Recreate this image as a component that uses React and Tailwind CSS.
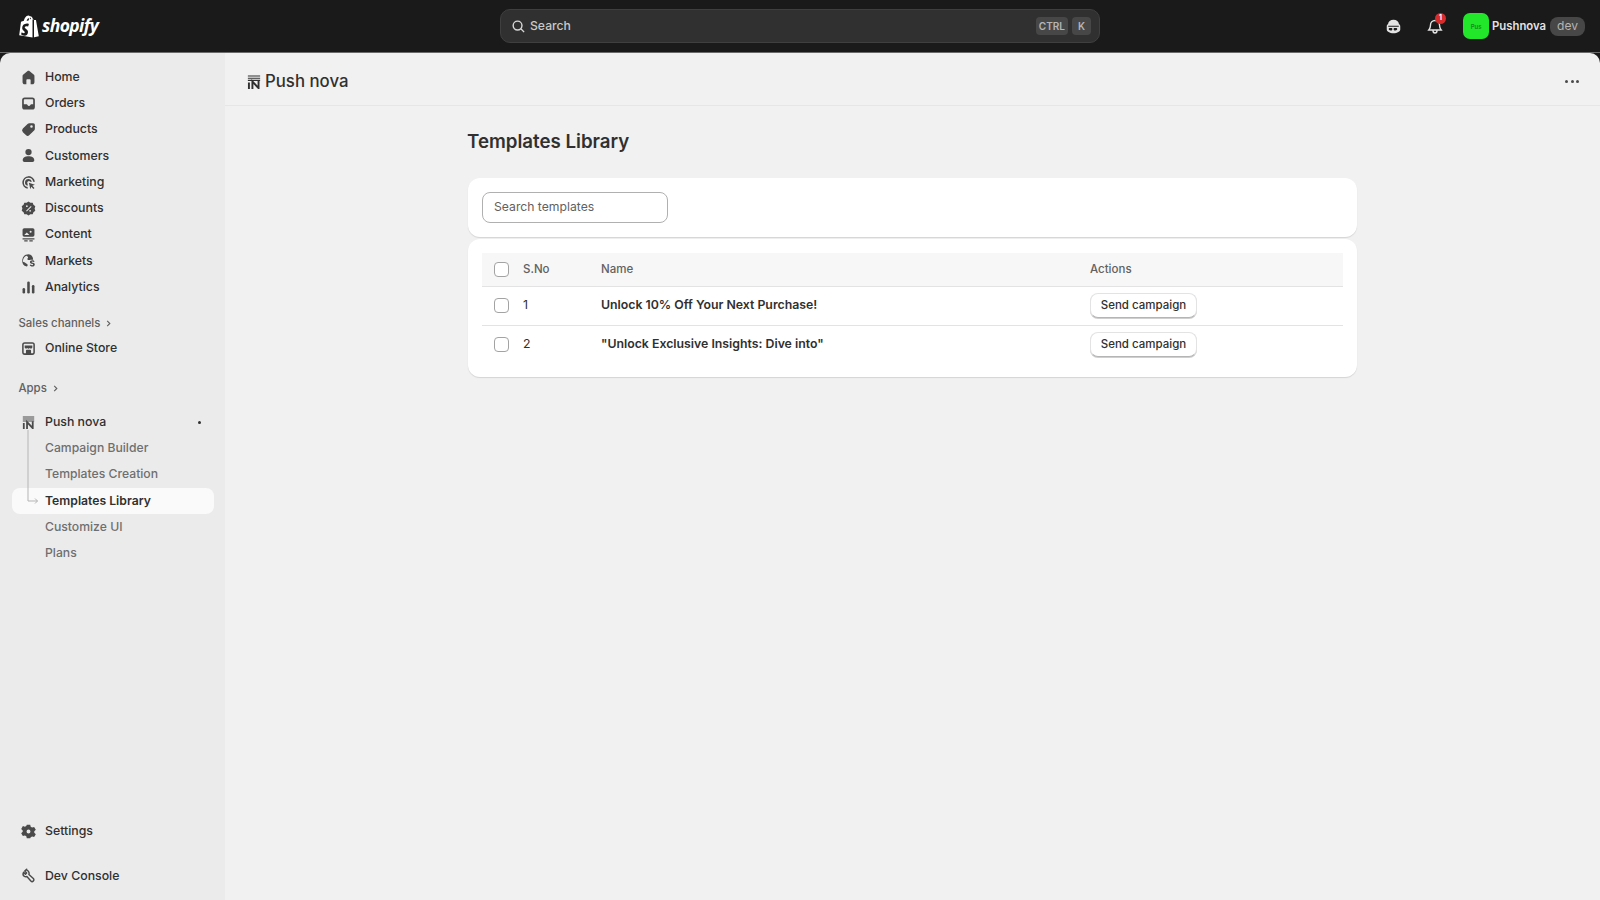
import React from 'react'

const Icon = ({ children, className = "w-[17px] h-[17px]" }) => (
  <svg viewBox="0 0 20 20" className={className} fill="currentColor">{children}</svg>
)

const PushNovaIcon = ({ className }) => (
  <svg viewBox="0 0 16 16" className={className} fill="none" stroke="currentColor">
    <path d="M1 1.200h14M1 3.700h14M1 6.200h14" strokeWidth="1.300" />
    <path d="M2.200 8.500v7.500M6.200 16V7.500l7 7.500V6.500" strokeWidth="2.200" />
  </svg>
)

const icons = {
  home: <path d="M10 2.200c-.5 0-1 .2-1.400.5L3.600 6.900C3.200 7.300 3 7.800 3 8.400v7.100C3 16.900 4.100 18 5.500 18H7.500v-5a1 1 0 0 1 1-1h3a1 1 0 0 1 1 1v5h2c1.400 0 2.500-1.100 2.500-2.500V8.400c0-.6-.2-1.100-.6-1.500l-5-4.200c-.4-.3-.9-.5-1.400-.5Z" />,
  orders: <path fillRule="evenodd" d="M5.500 3A3 3 0 0 0 2.500 6v8a3 3 0 0 0 3 3h9a3 3 0 0 0 3-3V6a3 3 0 0 0-3-3h-9ZM4.500 11V6a1 1 0 0 1 1-1h9a1 1 0 0 1 1 1v5h-2.200c-.5 0-.9.300-1.100.700-.3.700-1 1.100-1.700 1.100s-1.400-.4-1.700-1.100c-.2-.4-.6-.7-1.100-.7H4.500Z" />,
  products: <path fillRule="evenodd" d="M11 2.500h4.500A2 2 0 0 1 17.500 4.500V9c0 .8-.3 1.500-.9 2.100l-5.500 5.500a3 3 0 0 1-4.200 0l-3.500-3.500a3 3 0 0 1 0-4.200l5.500-5.500c.6-.6 1.300-.9 2.100-.9Zm2.500 5.500a1.500 1.500 0 1 0 0-3 1.500 1.500 0 0 0 0 3Z" />,
  customers: <><circle cx="10" cy="6" r="3.700" /><path d="M3.200 15.500c0-2.700 2.800-4.500 6.800-4.500s6.800 1.800 6.800 4.500c0 1.200-.9 2-2 2H5.200c-1.100 0-2-.8-2-2Z" /></>,
  marketing: <><path d="M10 2.500a7.500 7.500 0 0 0-1 14.900v-2A5.500 5.500 0 1 1 15.500 9h2A7.500 7.500 0 0 0 10 2.500Z" /><path d="M10 6a4 4 0 0 0-1 7.900v-2.200A2 2 0 1 1 12 9h2a4 4 0 0 0-4-3Z" /><path d="M10.500 10.200l7 2.300-3 1.300 2.500 2.700-1.200 1.100-2.500-2.600-1.200 3-1.600-7.800Z" /></>,
  discounts: <path fillRule="evenodd" d="M10 1.800l2.200 1.500 2.700-.1.900 2.500 2.200 1.600-.8 2.700.8 2.700-2.200 1.600-.9 2.500-2.700-.1-2.200 1.500-2.200-1.500-2.700.1-.9-2.500-2.200-1.600.8-2.700-.8-2.700 2.200-1.600.9-2.500 2.700.1L10 1.800Zm-1.900 6.500a1 1 0 1 0 0-2 1 1 0 0 0 0 2Zm3.800 5.400a1 1 0 1 0 0-2 1 1 0 0 0 0 2ZM12.800 7l-5.600 5.600.8.800L13.600 7.800 12.800 7Z" />,
  content: <><path fillRule="evenodd" d="M5 2.500h10A2 2 0 0 1 17 4.500v6A2 2 0 0 1 15 12.500H5A2 2 0 0 1 3 10.500v-6A2 2 0 0 1 5 2.500Zm7.500 3a1.200 1.200 0 1 0 0 2.400 1.200 1.200 0 0 0 0-2.400ZM5 10.500l3-3 3 3H5Z" /><path d="M3 14.300h14v1.500H3zM5 16.800h4v1.400H5zM11 16.800h4v1.400h-4z" /></>,
  markets: <><path fillRule="evenodd" d="M10 2.500a7.500 7.500 0 0 0-2 14.700c.7-.5 1-1.100 1-2 0-1.400-1.800-1.300-2.500-2.200-.8-1-2-.7-3-1.500C3.200 9 5 5 8 4.500c.5 1 1.500 1 1.500 2S8 8 9 9.200c1 .5 2 0 3 .3V9h3.500c0-3.600-2.500-6.500-5.500-6.500Z" /><path d="M14.500 9.800c-1.700 0-2.800.9-2.800 2.200 0 2.300 3.800 1.500 3.800 2.800 0 .5-.5.8-1.100.8-.8 0-1.300-.4-1.600-1l-1.400.7c.5 1.100 1.600 1.800 3 1.800 1.800 0 3-1 3-2.400 0-2.400-3.800-1.700-3.800-2.900 0-.4.400-.7 1-.7s1 .3 1.300.8l1.300-.7c-.5-.9-1.400-1.400-2.700-1.400Z" /></>,
  analytics: <><rect x="3" y="10.500" width="3" height="6.500" rx="1.500" /><rect x="8.500" y="3" width="3" height="14" rx="1.500" /><rect x="14" y="7" width="3" height="10" rx="1.500" /></>,
  store: <><path fillRule="evenodd" d="M5.500 2.500h9a3 3 0 0 1 3 3v9a3 3 0 0 1-3 3h-9a3 3 0 0 1-3-3v-9a3 3 0 0 1 3-3Zm0 1.800A1.200 1.200 0 0 0 4.300 5.500v9c0 .7.500 1.200 1.200 1.200H7V12.500a1 1 0 0 1 1-1h4a1 1 0 0 1 1 1v3.200h1.500c.7 0 1.200-.5 1.200-1.200v-9c0-.7-.5-1.200-1.200-1.200h-9Z" /><path d="M5.500 6.500h9v2.200a1.700 1.700 0 0 1-3 .6 2 2 0 0 1-3 0 1.700 1.700 0 0 1-3-.6V6.500Z" /></>,
  settings: <path fillRule="evenodd" d="M8 2h4l.6 2.400 1.600.9 2.400-.7 2 3.400-1.800 1.700v1.800l1.800 1.700-2 3.400-2.400-.7-1.600.9L12 18H8l-.6-2.400-1.600-.9-2.400.7-2-3.400 1.800-1.700V8.700L1.400 7l2-3.400 2.400.7 1.600-.9L8 2Zm2 10.300a2.300 2.300 0 1 0 0-4.600 2.300 2.300 0 0 0 0 4.600Z" />,
  console: <path fill="none" stroke="currentColor" strokeWidth="1.700" strokeLinejoin="round" d="M7.800 2.600 5.600 4.800l2.200 2.200-1.400 1.400-2.200-2.200c-1 2-.7 3.700.7 4.700 1 .7 2.200.8 3.200.3l4.700 5.300c.8.800 2.100.8 2.900 0s.8-2.100 0-2.900l-5.200-4.800c.5-1.100.3-2.300-.4-3.300-.7-1-1.500-1.700-2.500-2.100Z" />,
}

const NavRow = ({ icon, label }) => (
  <div className="flex items-center h-[26.25px] pl-[20px] text-[12.3px] font-medium text-[#303030]">
    <span className="w-[17px] flex justify-center text-[#4a4a4a]"><Icon>{icons[icon]}</Icon></span>
    <span className="ml-[8px]">{label}</span>
  </div>
)

const SectionLabel = ({ label, className }) => (
  <div className={`flex items-center gap-[5px] h-[20px] pl-[18.500px] text-[11.400px] font-medium text-[#616161] ${className}`}>
    {label}
    <svg viewBox="0 0 8 8" className="w-[7px] h-[7px]" fill="none" stroke="currentColor" strokeWidth="1.300"><path d="M2.500 1 5.500 4 2.500 7" /></svg>
  </div>
)

const SubRow = ({ label, active }) => (
  <div className={`flex items-center h-[26.25px] ml-[12px] mr-[11px] pl-[33px] text-[12.2px] ${active ? "bg-[#fafafa] rounded-[8px] font-semibold text-[#303030]" : "font-medium text-[#6f6f6f]"}`}>
    {label}
  </div>
)

const Sidebar = () => (
  <aside className="w-[225px] shrink-0 h-full flex flex-col bg-[#ebebeb] rounded-tl-[10px] pt-[11px]">
    <NavRow icon="home" label="Home" />
    <NavRow icon="orders" label="Orders" />
    <NavRow icon="products" label="Products" />
    <NavRow icon="customers" label="Customers" />
    <NavRow icon="marketing" label="Marketing" />
    <NavRow icon="discounts" label="Discounts" />
    <NavRow icon="content" label="Content" />
    <NavRow icon="markets" label="Markets" />
    <NavRow icon="analytics" label="Analytics" />
    <SectionLabel label="Sales channels" className="mt-[13px] mb-[2px]" />
    <NavRow icon="store" label="Online Store" />
    <SectionLabel label="Apps" className="mt-[17px] mb-[10.500px]" />
    <div className="relative">
      <div className="flex items-center h-[26.25px] pl-[20px] pr-[24px] text-[12.3px] font-medium text-[#303030]">
        <span className="w-[17px] flex justify-center text-[#4a4a4a]"><PushNovaIcon className="w-[13px] h-[13px]" /></span>
        <span className="ml-[8px]">Push nova</span>
        <span className="ml-auto w-[3px] h-[3px] rounded-full bg-[#303030]" />
      </div>
      <SubRow label="Campaign Builder" />
      <SubRow label="Templates Creation" />
      <SubRow label="Templates Library" active />
      <SubRow label="Customize UI" />
      <SubRow label="Plans" />
      {/* tree line */}
      <svg className="absolute left-[26px] top-[21px] w-[14px] h-[75px]" viewBox="0 0 14 75" fill="none" stroke="#b5b5b5" strokeWidth="1">
        <path d="M2 0V71H11.500M9 68.500 11.500 71 9 73.500" />
      </svg>
    </div>
    <div className="mt-auto">
      <div className="pb-[18.500px]"><NavRow icon="settings" label="Settings" /></div>
      <div className="pb-[11px]"><NavRow icon="console" label="Dev Console" /></div>
    </div>
  </aside>
)

const TopBar = () => (
  <header className="h-[53px] shrink-0 flex items-center bg-[#1a1a1a] border-b border-[#6b6b6b] pl-[19px] pr-[15px] relative">
    <div className="w-[481px] flex items-center gap-[3px] text-white shrink-0">
      <svg viewBox="0 0 20 23" className="w-[20px] h-[23px]" fill="currentColor">
        <path d="M15.200 4.400 13.900 4.100C13.500 2.500 12.600 1.300 11.300 1.300L10.900 1.300C10.500.8 10 .5 9.500.5 6.700.5 5.300 4 4.900 5.800L2.700 6.500C2 6.700 2 6.700 1.900 7.400L.2 20.200 13.500 22.500V4.400ZM9.900 5.200 7.700 5.900C8 4.700 8.600 3.500 9.700 3c.2.500.2 1.200.2 2.200ZM11 2.500c.5.100.8.700 1 1.500l-1.100.3c0-.7-.1-1.300.1-1.800ZM14 22.500l5.800-1.300L17 5.300c0-.1-.2-.2-.3-.2L15 5V22.500Z" />
        <path d="M9.800 9.400 9 11.700s-.8-.4-1.700-.4c-1.400 0-1.500.9-1.500 1.100 0 1.200 3.200 1.700 3.200 4.600 0 2.300-1.400 3.700-3.400 3.700-2.300 0-3.500-1.500-3.500-1.500l.6-2s1.200 1 2.200 1c.7 0 .9-.5.9-.9 0-1.600-2.600-1.700-2.600-4.400 0-2.200 1.600-4.400 4.800-4.400 1.300 0 1.800.4 1.800.4Z" fill="#1a1a1a" />
      </svg>
      <span className="text-[17.500px] leading-none font-bold italic tracking-[-0.6px] font-['Open_Sans',sans-serif] mb-[1px]">shopify</span>
    </div>
    <div className="w-[600px] h-[34px] shrink-0 flex items-center rounded-[10px] bg-[#303030] border border-[#3f3f3f] pl-[10px] pr-[8px] text-[12.2px] font-medium text-[#c9c9c9]">
      <svg viewBox="0 0 16 16" className="w-[15px] h-[15px]" fill="none" stroke="#d8d8d8" strokeWidth="1.500"><circle cx="7" cy="7" r="4.700" /><path d="m10.500 10.500 3.500 3.500" /></svg>
      <span className="ml-[4px]">Search</span>
      <span className="ml-auto h-[18px] px-[3px] flex items-center rounded-[4px] bg-[#474747] text-[10px] font-semibold text-[#b5b5b5]">CTRL</span>
      <span className="ml-[4px] w-[19px] h-[18px] flex items-center justify-center rounded-[4px] bg-[#474747] text-[10px] font-semibold text-[#b5b5b5]">K</span>
    </div>
    <div className="ml-auto flex items-center">
      <svg viewBox="0 0 16 16" className="w-[15px] h-[15px] text-[#e3e3e3]" fill="currentColor">
        <path fillRule="evenodd" d="M8 .8c3.300 0 5.500 1.900 5.800 4.600.9.500 1.400 1.300 1.400 2.500v3.300c0 2.100-3 4-7.200 4S.8 13.300.8 11.200V7.900c0-1.200.5-2 1.400-2.500C2.500 2.700 4.700.8 8 .8ZM2.400 7.300h11.200v.9H2.400v-.9Zm1.500 2.400c-.6 0-1 .4-1 1s.7 1.500 2 1.500 1.900-.6 1.900-1.400-.5-1.100-1.100-1.100H3.900Zm5.300 0c-.6 0-1.100.4-1.100 1.100s.7 1.400 1.900 1.400 2-.9 2-1.500-.4-1-1-1H9.200Z" />
      </svg>
      <div className="relative ml-[26px] mr-[20px] w-[16px] h-[18px] flex items-center">
        <svg viewBox="0 0 16 18" className="w-[16px] h-[18px]" fill="none" stroke="#e3e3e3" strokeWidth="1.400"><path d="M3.500 8a4.500 4.500 0 0 1 9 0c0 3 .8 3.500 1.800 5H1.700c1-1.500 1.800-2 1.800-5ZM6 13.500c0 1.300.8 2.500 2 2.500s2-1.200 2-2.500" /></svg>
        <span className="absolute -top-[4px] left-[8px] w-[11px] h-[11px] rounded-full bg-[#d72c2c] text-white text-[7px] font-bold flex items-center justify-center">1</span>
      </div>
      <div className="w-[26px] h-[26px] rounded-[7px] bg-[#22e62a] flex items-center justify-center text-[6px] font-semibold text-[#17891c]">Pus</div>
      <span className="ml-[3px] text-[11.300px] font-semibold text-[#e3e3e3]">Pushnova</span>
      <span className="ml-[4px] w-[35px] h-[19px] rounded-[8px] bg-[#474747] flex items-center justify-center text-[12px] text-[#b5b5b5]">dev</span>
    </div>
  </header>
)

const Checkbox = () => (
  <span className="block w-[15px] h-[15px] rounded-[4px] border border-[#a3a3a3] bg-white" />
)

const rows = [
  { no: 1, name: "Unlock 10% Off Your Next Purchase!" },
  { no: 2, name: "\"Unlock Exclusive Insights: Dive into\"" },
]

const TemplatesLibrary = () => (
  <main className="flex-1 h-full min-w-0 bg-[#f1f1f1] rounded-tr-[10px]">
    <div className="h-[53px] flex items-center justify-between border-b border-[#e6e6e6] pl-[22px] pr-[21px] pt-[5px]">
      <div className="flex items-center text-[#303030]">
        <PushNovaIcon className="w-[14px] h-[14px]" />
        <span className="ml-[4px] text-[16.800px] font-medium text-[#303030]">Push nova</span>
      </div>
      <div className="flex gap-[2.500px]">
        <span className="w-[3px] h-[3px] rounded-full bg-[#4a4a4a]" />
        <span className="w-[3px] h-[3px] rounded-full bg-[#4a4a4a]" />
        <span className="w-[3px] h-[3px] rounded-full bg-[#4a4a4a]" />
      </div>
    </div>
    <div className="w-[889px] ml-[243px] pt-[22px]">
      <h1 className="h-[28px] -ml-[1px] flex items-center text-[18.700px] font-semibold text-[#303030]">Templates Library</h1>
      <div className="mt-[22px] h-[59px] flex items-center px-[14px] bg-white rounded-[12px] shadow-[0_1px_1px_#d4d4d4]">
        <div className="w-[186px] h-[31px] flex items-center pl-[11px] rounded-[8px] border border-[#b0b0b0] bg-white text-[12.200px] text-[#616161]">Search templates</div>
      </div>
      <div className="mt-[2px] h-[138px] px-[14px] pt-[14px] bg-white rounded-[12px] shadow-[0_1px_1px_#d4d4d4]">
        <div className="h-[34px] flex items-center bg-[#f7f7f7] border-b border-[#e3e3e3] text-[11.500px] font-medium text-[#616161]">
          <span className="w-[41px] pl-[12px]"><Checkbox /></span>
          <span className="w-[78px]">S.No</span>
          <span className="w-[489px]">Name</span>
          <span>Actions</span>
        </div>
        {rows.map((r, i) => (
          <div key={r.no} className={`h-[38.500px] flex items-center text-[12.300px] text-[#303030] ${i === 0 ? "border-b border-[#e3e3e3]" : ""}`}>
            <span className="w-[41px] pl-[12px]"><Checkbox /></span>
            <span className="w-[78px] -mt-[1px]">{r.no}</span>
            <span className="w-[489px] font-semibold -mt-[1px]">{r.name}</span>
            <button className="w-[107px] h-[25px] rounded-[8px] bg-white border border-[#e3e3e3] border-b-[#b5b5b5] shadow-[0_1px_0_#cfcfcf] text-[11.500px] font-medium text-[#303030]">Send campaign</button>
          </div>
        ))}
      </div>
    </div>
  </main>
)

const App = () => (
  <div className="w-full h-[900px] overflow-hidden flex flex-col bg-[#1a1a1a] font-['Inter',sans-serif]">
    <TopBar />
    <div className="flex flex-1 min-h-0">
      <Sidebar />
      <TemplatesLibrary />
    </div>
  </div>
)

export default App
